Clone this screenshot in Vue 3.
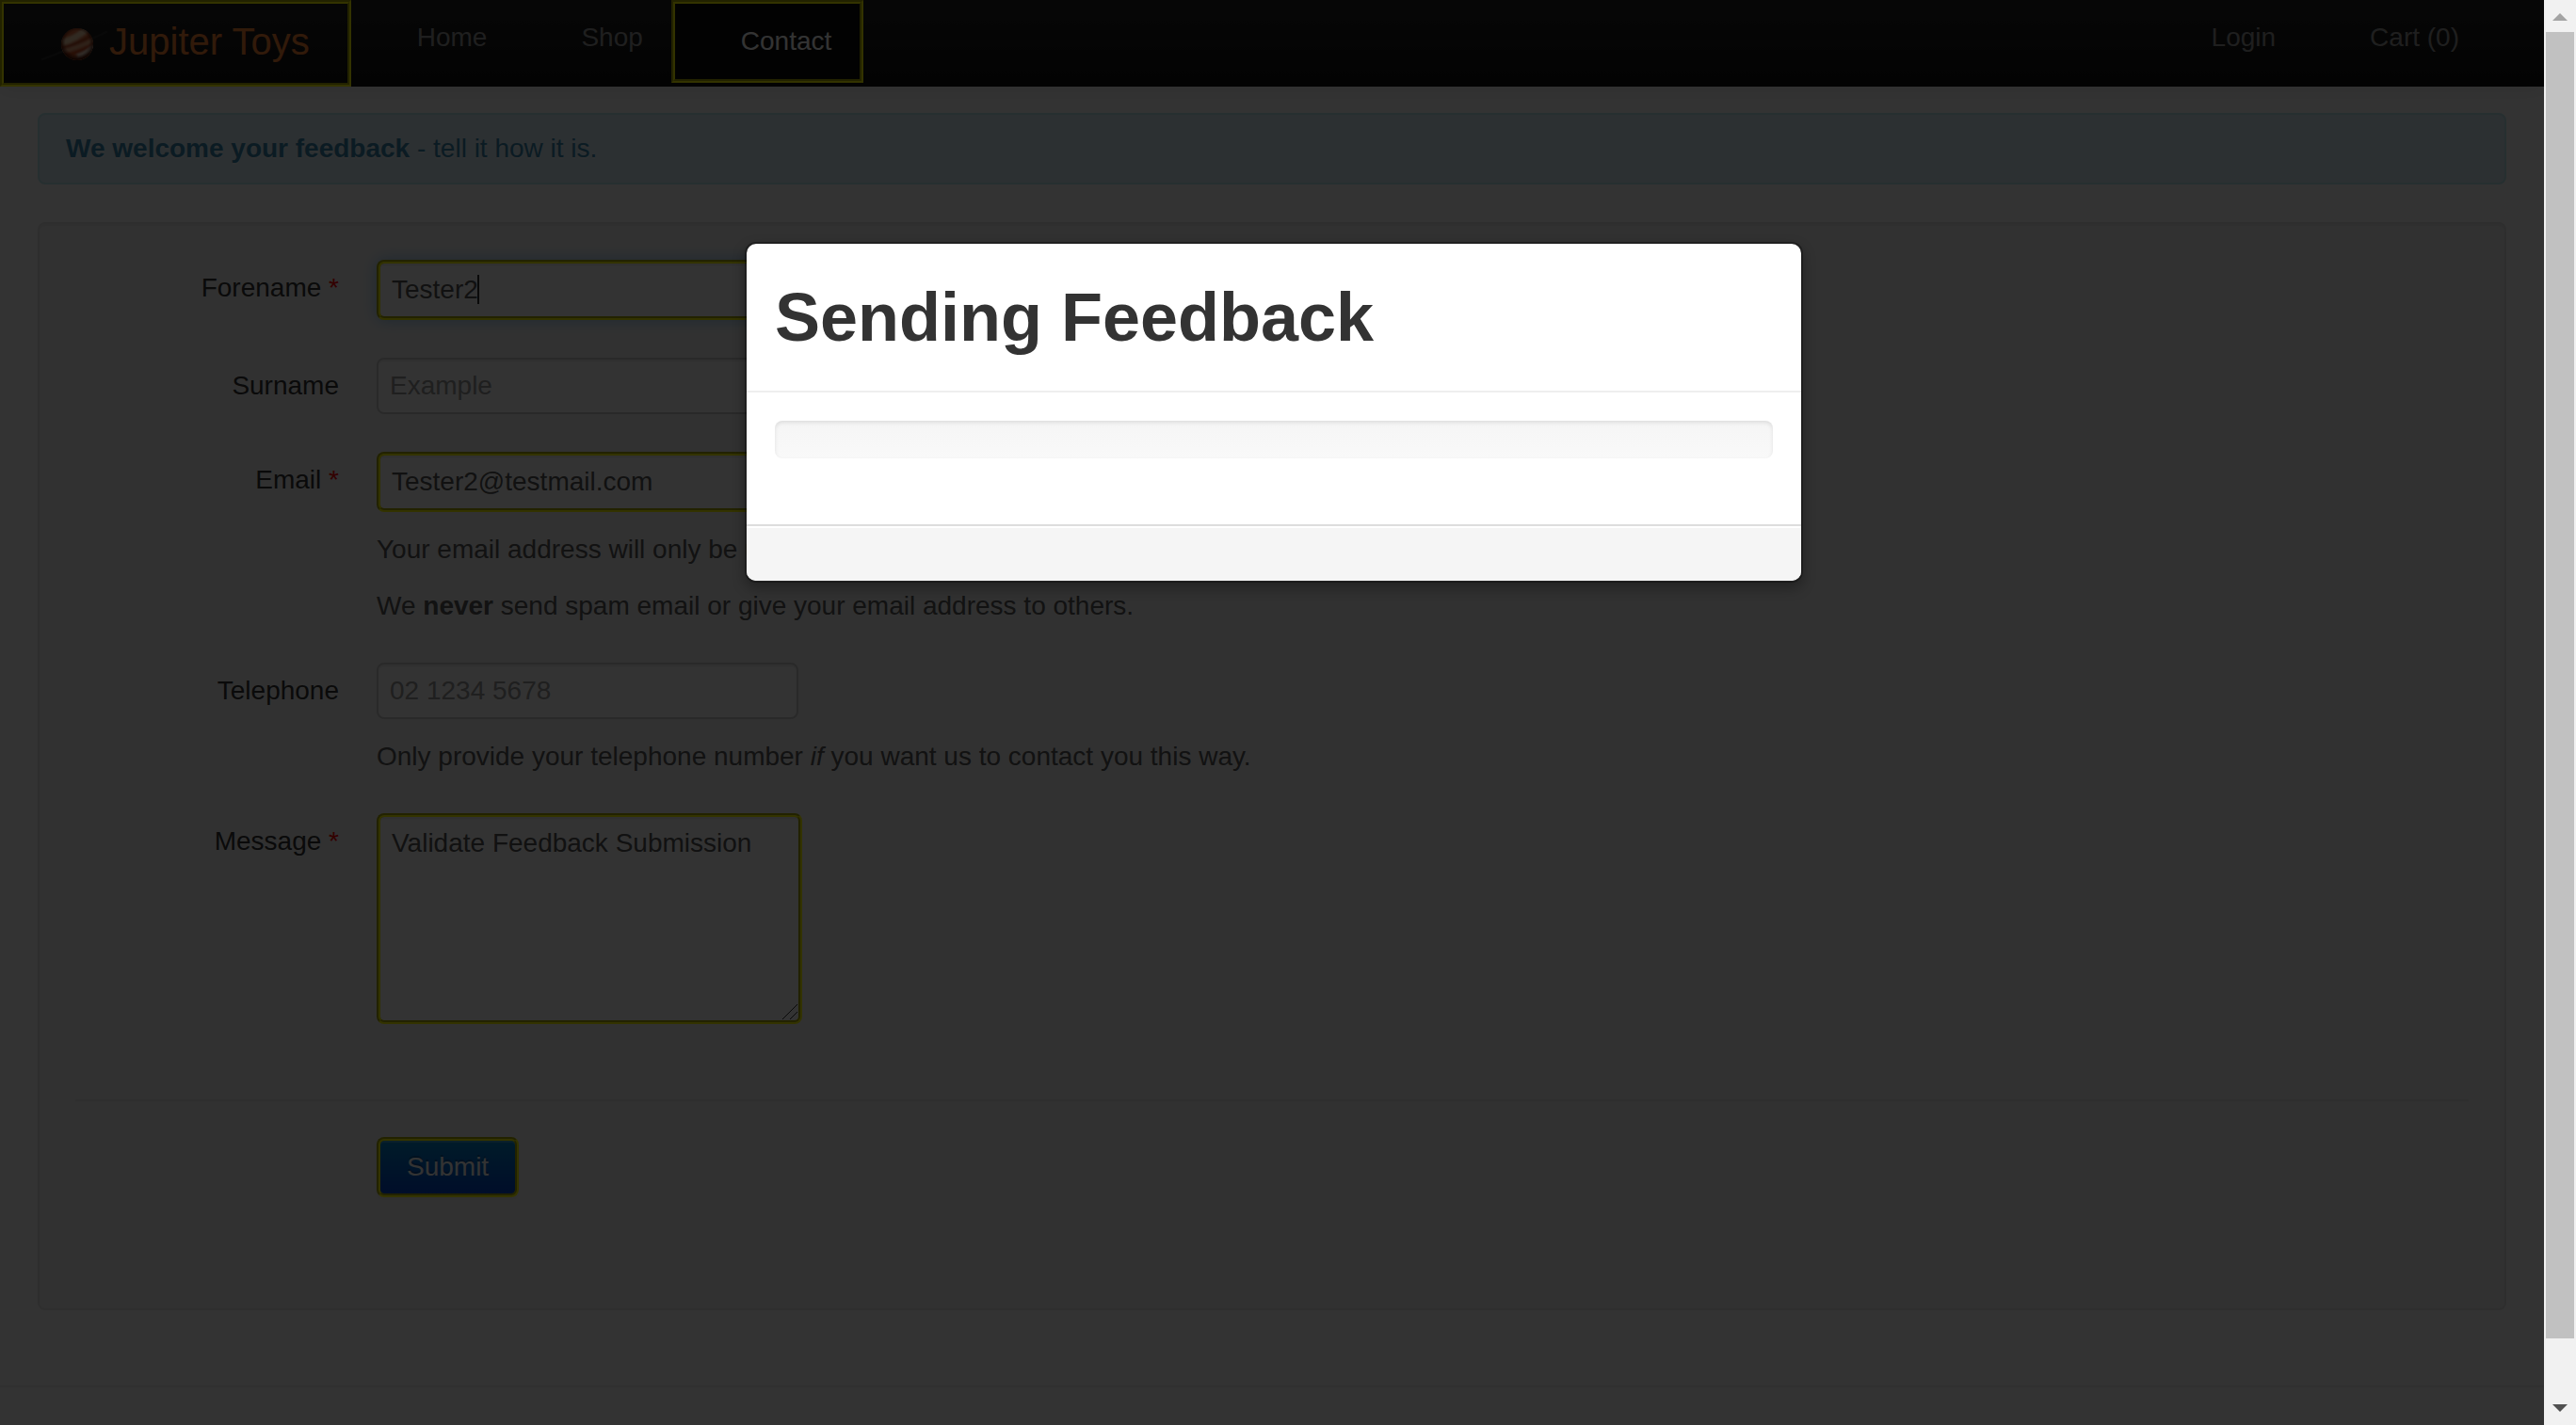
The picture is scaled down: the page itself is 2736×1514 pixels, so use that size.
<script setup>
import { ref } from 'vue'

const mainLinks = [
  { label: 'Home', active: false },
  { label: 'Shop', active: false },
  { label: 'Contact', active: true },
]
const userLinks = ['Login', 'Cart (0)']

const forename = ref('Tester2')
const surname = ref('')
const email = ref('Tester2@testmail.com')
const telephone = ref('')
const message = ref('Validate Feedback Submission')
</script>

<template>
  <div class="shell">
    <div class="page">
      <header class="navbar">
        <a class="brand marked" href="#home">
          <svg class="planet" viewBox="0 0 72 46" aria-hidden="true">
            <defs>
              <radialGradient id="shade" cx="0.5" cy="0.45" r="0.52">
                <stop offset="0.7" stop-color="#500f00" stop-opacity="0" />
                <stop offset="1" stop-color="#300a00" stop-opacity="0.85" />
              </radialGradient>
              <clipPath id="disc"><circle cx="38" cy="23" r="17" /></clipPath>
              <filter id="soft"><feGaussianBlur stdDeviation="1" /></filter>
            </defs>
            <path d="M1 39 L22 31 M54 17 L69 10" stroke="#2c2c2c" stroke-width="2" stroke-linecap="round" />
            <g clip-path="url(#disc)">
              <rect x="20" y="5" width="36" height="36" fill="#d8683a" />
              <g filter="url(#soft)" fill="none" stroke-width="4">
                <path d="M22 21 Q38 17 50 5" stroke="#f4d0a8" stroke-width="7" />
                <path d="M20 27 Q38 24 56 12" stroke="#b04a20" stroke-width="3" />
                <path d="M20 31 Q38 28 58 17" stroke="#e8a880" />
                <path d="M22 36 Q40 32 58 22" stroke="#c84c1c" />
                <path d="M38 36 Q48 33 56 25" stroke="#fff0dc" />
                <path d="M28 42 Q44 40 54 32" stroke="#c0522a" />
              </g>
              <circle cx="38" cy="23" r="17" fill="url(#shade)" />
            </g>
          </svg>
          <span>Jupiter Toys</span>
        </a>
        <nav class="links">
          <a
            v-for="link in mainLinks"
            :key="link.label"
            href="#"
            class="link"
            :class="{ 'active marked': link.active }"
          >{{ link.label }}</a>
        </nav>
        <nav class="links user">
          <a v-for="label in userLinks" :key="label" href="#" class="link">{{ label }}</a>
        </nav>
      </header>

      <main class="content">
        <div class="alert"><strong>We welcome your feedback</strong> - tell it how it is.</div>

        <form class="well" @submit.prevent>
          <div class="group">
            <label for="forename">Forename <span class="req">*</span></label>
            <div class="controls">
              <div class="field">
                <input id="forename" v-model="forename" class="marked focused" type="text" />
                <span class="caret"></span>
              </div>
            </div>
          </div>
          <div class="group">
            <label for="surname">Surname</label>
            <div class="controls">
              <input id="surname" v-model="surname" type="text" placeholder="Example" />
            </div>
          </div>
          <div class="group">
            <label for="email">Email <span class="req">*</span></label>
            <div class="controls">
              <input id="email" v-model="email" class="marked" type="email" />
              <p class="help">Your email address will only be used to respond to your feedback.</p>
              <p class="help">We <strong>never</strong> send spam email or give your email address to others.</p>
            </div>
          </div>
          <div class="group">
            <label for="telephone">Telephone</label>
            <div class="controls">
              <input id="telephone" v-model="telephone" type="tel" placeholder="02 1234 5678" />
              <p class="help">Only provide your telephone number <em>if</em> you want us to contact you this way.</p>
            </div>
          </div>
          <div class="group">
            <label for="message">Message <span class="req">*</span></label>
            <div class="controls">
              <div class="field">
                <textarea id="message" v-model="message" class="marked"></textarea>
                <svg class="grip" viewBox="0 0 18 18" aria-hidden="true">
                  <path d="M1 17 L17 1 M9 17 L17 9" stroke="#333" fill="none" />
                </svg>
              </div>
            </div>
          </div>
          <div class="actions">
            <button class="submit marked" type="submit">Submit</button>
          </div>
        </form>
      </main>
      <hr class="footer-rule" />

      <div class="backdrop">
        <section class="modal" role="dialog" aria-labelledby="modal-title">
          <header class="modal-header"><h1 id="modal-title">Sending Feedback</h1></header>
          <div class="modal-body"><div class="progress" role="progressbar" aria-label="Sending"></div></div>
          <footer class="modal-footer"></footer>
        </section>
      </div>
    </div>

    <aside class="scrollbar" aria-hidden="true">
      <svg class="arrow" viewBox="0 0 34 34"><path d="M9 22 L17 14 L25 22 Z" fill="#a3a3a3" /></svg>
      <div class="track"><div class="thumb"></div></div>
      <svg class="arrow" viewBox="0 0 34 34"><path d="M9 12 H25 L17 20 Z" fill="#505050" /></svg>
    </aside>
  </div>
</template>

<style>
body {
  background: #fff;
}
</style>

<style scoped>
.shell {
  display: grid;
  grid-template-columns: minmax(0, 1fr) 34px;
  height: 100vh;
  font-family: "Liberation Sans", Arial, sans-serif;
  font-size: 28px;
  line-height: 40px;
  color: #333;
}

.page {
  position: relative;
  overflow: hidden;
  background: #fff;
}

.marked {
  border: 4px groove yellow;
}

a {
  text-decoration: none;
}

.navbar {
  display: flex;
  align-items: flex-start;
  height: 92px;
  background: linear-gradient(#222, #111);
  box-shadow: 0 2px 20px rgba(0, 0, 0, 0.1);
}

.brand {
  box-sizing: border-box;
  display: flex;
  align-items: flex-start;
  height: 92px;
  padding: 20px 40px;
  font-size: 40px;
  color: #f58033;
}

.planet {
  width: 72px;
  height: 46px;
}

.links {
  display: flex;
  align-items: flex-start;
}

.user {
  margin-left: auto;
  padding-right: 60px;
}

.link {
  padding: 20px 30px 20px 70px;
  color: #999;
}

.link.active {
  color: #fff;
  background: #0c0c0c;
}

.content {
  padding: 28px 40px 40px;
}

.alert {
  margin-bottom: 40px;
  padding: 16px 28px;
  border: 2px solid #bce8f1;
  border-radius: 8px;
  background: #d9edf7;
  color: #3a87ad;
  text-shadow: 0 2px 0 rgba(255, 255, 255, 0.5);
}

.well {
  padding: 38px;
  border: 2px solid #e3e3e3;
  border-radius: 8px;
  background: #f5f5f5;
  box-shadow: inset 0 2px 2px rgba(0, 0, 0, 0.05);
}

.group {
  display: flex;
  gap: 40px;
  margin-bottom: 40px;
}

.group label {
  width: 280px;
  padding-top: 10px;
  text-align: right;
}

.req {
  color: red;
}

.controls {
  flex: 1;
}

.field {
  position: relative;
  width: 452px;
}

input,
textarea {
  display: block;
  box-sizing: content-box;
  width: 420px;
  height: 40px;
  margin: 0;
  padding: 8px 12px;
  border: 2px solid #ccc;
  border-radius: 8px;
  outline: 0;
  background: #fff;
  box-shadow: inset 0 2px 2px rgba(0, 0, 0, 0.075);
  font: inherit;
  color: #555;
}

input.marked,
textarea.marked {
  border: 4px groove yellow;
}

textarea {
  height: 200px;
  resize: none;
}

input::placeholder {
  color: #999;
  opacity: 1;
}

input.focused {
  box-shadow: inset 0 2px 2px rgba(0, 0, 0, 0.075), 0 0 16px rgba(82, 168, 236, 0.6);
}

.caret {
  position: absolute;
  top: 16px;
  left: 107px;
  width: 2px;
  height: 31px;
  background: #333;
}

.grip {
  position: absolute;
  right: 4px;
  bottom: 4px;
  width: 18px;
  height: 18px;
}

.help {
  margin: 20px 0 0;
  color: #595959;
}

.actions {
  margin: 80px 0 40px;
  padding: 38px 0 40px 320px;
  border-top: 2px solid #e5e5e5;
}

.submit {
  display: block;
  padding: 8px 28px;
  border-radius: 8px;
  background: linear-gradient(#08c, #04c);
  box-shadow: inset 0 2px 0 rgba(255, 255, 255, 0.2), 0 2px 4px rgba(0, 0, 0, 0.05);
  font: inherit;
  color: #fff;
  text-shadow: 0 -2px 0 rgba(0, 0, 0, 0.25);
}

.footer-rule {
  margin: 40px 0 0;
  border: 0;
  border-top: 2px solid #eee;
}

.backdrop {
  position: absolute;
  inset: 0;
  display: flex;
  align-items: flex-start;
  justify-content: center;
  padding: 257px 0 0 4px;
  background: rgba(0, 0, 0, 0.8);
}

.modal {
  width: 1120px;
  border: 2px solid rgba(0, 0, 0, 0.3);
  border-radius: 12px;
  background: #fff;
  background-clip: padding-box;
  box-shadow: 0 6px 14px rgba(0, 0, 0, 0.3);
}

.modal-header {
  padding: 18px 30px;
  border-bottom: 2px solid #eee;
}

.modal-header h1 {
  margin: 20px 0;
  font-size: 72px;
  line-height: 80px;
}

.modal-body {
  padding: 30px 30px 70px;
}

.progress {
  height: 40px;
  border-radius: 8px;
  background: linear-gradient(#f5f5f5, #f9f9f9);
  box-shadow: inset 0 2px 4px rgba(0, 0, 0, 0.1);
}

.modal-footer {
  padding: 28px 30px 30px;
  border-top: 2px solid #ddd;
  border-radius: 0 0 10px 10px;
  background: #f5f5f5;
  box-shadow: inset 0 2px 0 #fff;
}

.scrollbar {
  display: flex;
  flex-direction: column;
  background: #f1f1f1;
}

.arrow {
  width: 34px;
  height: 34px;
}

.track {
  flex: 1;
  padding: 0 2px;
}

.thumb {
  height: 96%;
  background: #c1c1c1;
}
</style>
